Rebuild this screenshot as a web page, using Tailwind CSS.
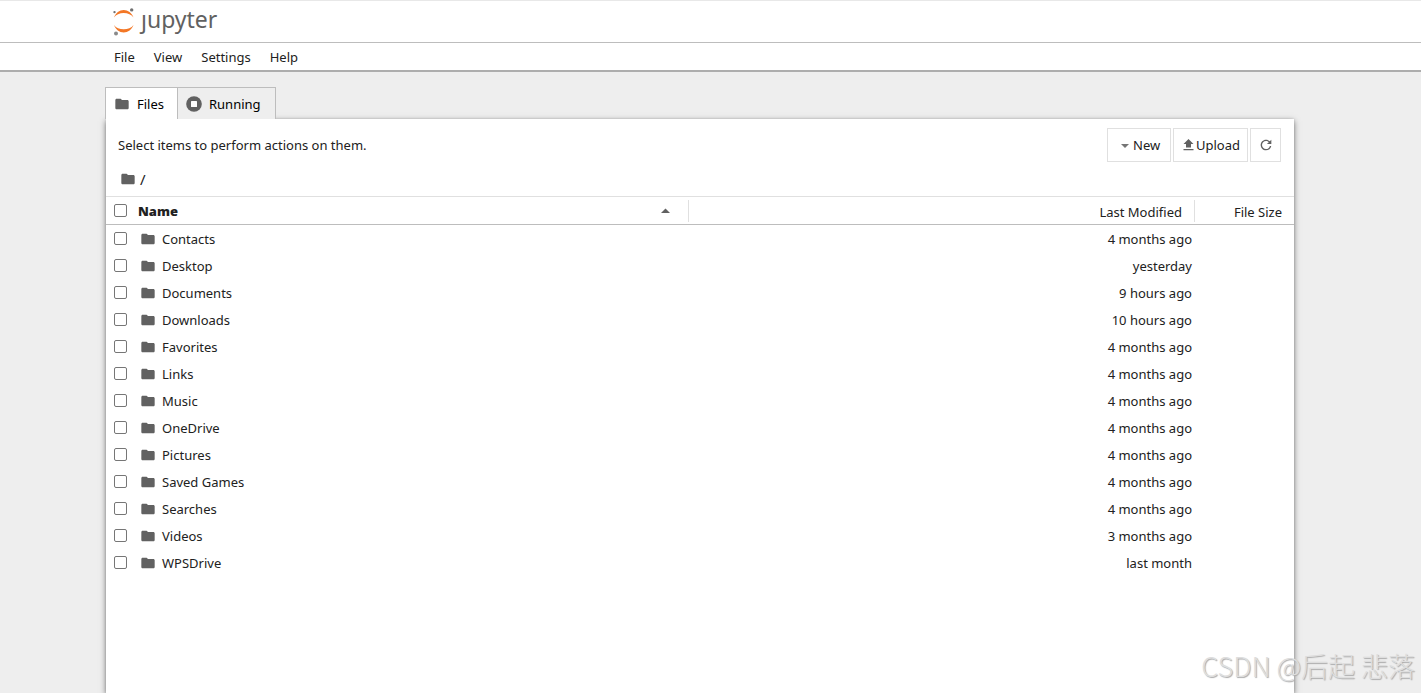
<!DOCTYPE html>
<html lang="en">

<head>
    <meta charset="UTF-8">
    <meta name="viewport" content="width=device-width, initial-scale=1.0">
    <title>Home</title>
    <script src="https://cdn.jsdelivr.net/npm/@tailwindcss/browser@4"></script>
</head>

<body class="flex flex-col h-screen overflow-hidden bg-[#eeeeee] text-[13px] leading-5 text-[#212121] font-['Noto_Sans','Noto_Sans_CJK_SC',sans-serif]">

    <svg class="hidden">
        <symbol id="folder" viewBox="0 0 24 24">
            <path fill="#616161" d="M10 4H4c-1.1 0-1.99.9-1.99 2L2 18c0 1.1.9 2 2 2h16c1.1 0 2-.9 2-2V8c0-1.1-.9-2-2-2h-8l-2-2z" />
        </symbol>
    </svg>

    <header class="shrink-0 bg-white border-t border-[#e8e8e8]">
        <div class="flex items-start h-[42px] pl-[112px] pt-[7px] border-b border-[#bdbdbd]">
            <a href="#" class="flex gap-[7px]">
                <svg class="w-[22px] h-7" viewBox="0 0 22 28">
                    <path fill="#f37726" d="M2 9.500C3.500 5 7.500 2 11.700 2S20 5 21.500 9.500C19.500 6.500 15.800 5 11.700 5S4 6.500 2 9.500z" />
                    <path fill="#f37726" d="M2 17C3.500 21.500 7.500 24.500 11.700 24.500S20 21.500 21.500 17C19.500 20 15.800 21.300 11.700 21.300S4 20 2 17z" />
                    <circle fill="#707070" cx="19.700" cy="1.900" r="1.700" />
                    <circle fill="#707070" cx="2.500" cy="4.100" r="1.200" />
                    <circle fill="#8a8a8a" cx="4" cy="25.500" r="2" />
                </svg>
                <!-- the wordmark's j has no dot -->
                <span class="relative text-[23px] leading-[22px] text-[#616161]">jupyter<i class="absolute left-0 -top-1 w-[7px] h-[9px] bg-white"></i></span>
            </a>
        </div>
        <nav class="h-[29px] pl-[114px] pt-1 border-b-2 border-[#adadad]">
            <ul class="flex gap-[19px]">
                <li><a href="#">File</a></li>
                <li><a href="#">View</a></li>
                <li><a href="#">Settings</a></li>
                <li><a href="#">Help</a></li>
            </ul>
        </nav>
    </header>

    <main class="flex flex-col grow ml-[105px] mr-[127px] pt-[15px]">
        <div class="flex relative z-10 text-black">
            <button class="flex items-center gap-[7px] h-8 w-[73px] pl-2 border border-b-0 border-[#bdbdbd] bg-white">
                <svg class="size-4"><use href="#folder" /></svg>Files
            </button>
            <button class="flex items-center gap-[7px] h-8 w-[98px] pl-2 border border-b-0 border-l-0 border-[#bdbdbd] bg-[#eeeeee]">
                <svg class="size-4" viewBox="0 0 16 16">
                    <circle cx="8" cy="8" r="7.800" fill="#616161" />
                    <rect x="5" y="5" width="6" height="6" rx="0.500" fill="#fff" />
                </svg>Running
            </button>
        </div>

        <section class="grow ml-px bg-white shadow-[0_0_2px_rgba(0,0,0,0.12),0_2px_6px_rgba(0,0,0,0.5)]">
            <div class="flex justify-between items-center pl-3 pr-[13px] pt-[9px]">
                <p>Select items to perform actions on them.</p>
                <div class="flex gap-[2px]">
                    <button class="flex items-center h-[34px] w-16 pl-3 gap-1 border border-[#e0e0e0]">
                        <svg class="w-[9px] h-4" viewBox="0 0 9 16"><path fill="#757575" d="M1 7h8L5 11z" /></svg>New
                    </button>
                    <button class="flex items-center h-[34px] w-[75px] pl-2 border border-[#e0e0e0]">
                        <svg class="w-[14px] h-4" viewBox="0 0 14 16"><path fill="#616161" d="M4 10.500h5V7h2.500L6.500 2 1.500 7H4zM1.500 12h10v1.200h-10z" /></svg>Upload
                    </button>
                    <button class="flex items-center justify-center h-[34px] w-[31px] border border-[#e0e0e0]" aria-label="Refresh">
                        <svg class="size-4" viewBox="0 0 18 18"><path fill="#616161" d="M9 13.500c-2.490 0-4.500-2.010-4.500-4.500S6.510 4.500 9 4.500c1.240 0 2.360.520 3.170 1.330L10 8h5V3l-1.760 1.760C12.150 3.680 10.660 3 9 3 5.690 3 3.010 5.690 3.010 9S5.690 15 9 15c2.970 0 5.430-2.160 5.900-5h-1.520c-.460 2-2.240 3.500-4.380 3.500z" /></svg>
                    </button>
                </div>
            </div>
            <div class="flex items-center gap-1 h-[34px] pl-[14px]">
                <a href="#" aria-label="Home"><svg class="size-4"><use href="#folder" /></svg></a>
                <span class="text-[15px]">/</span>
            </div>

            <table class="w-full table-fixed">
                <thead>
                    <tr class="h-7 border-t border-t-[#e0e0e0] border-b border-b-[#bdbdbd]">
                        <th class="w-8 pl-2 text-left"><input type="checkbox" id="all" aria-label="Select all" class="block appearance-none size-[13px] rounded-[2px] border border-[#767676] bg-white"></th>
                        <th class="w-[551px] p-0">
                            <div class="flex items-center justify-between h-[22px] pr-[18px] border-r border-[#e0e0e0]">
                                <b>Name</b>
                                <svg class="w-[9px] h-4" viewBox="0 0 9 16"><path fill="#616161" d="M0 10h9L4.500 5.500z" /></svg>
                            </div>
                        </th>
                        <th class="p-0 font-normal text-right"><div class="h-[22px] pt-[2px] pr-3 border-r border-[#e0e0e0]">Last Modified</div></th>
                        <th class="w-[99px] p-0 font-normal text-right"><div class="h-[22px] pt-[2px] pr-3">File Size</div></th>
                    </tr>
                </thead>
                <tbody id="files"></tbody>
            </table>
        </section>
    </main>

    <div class="absolute right-[6px] bottom-[7px] text-[27px] leading-10 text-[#dedede] [text-shadow:1px_1px_1px_#aaa] font-['Noto_Sans_CJK_SC',sans-serif] font-light">CSDN @后起 悲落</div>

    <script>
        const files = [
            ['Contacts', '4 months ago'],
            ['Desktop', 'yesterday'],
            ['Documents', '9 hours ago'],
            ['Downloads', '10 hours ago'],
            ['Favorites', '4 months ago'],
            ['Links', '4 months ago'],
            ['Music', '4 months ago'],
            ['OneDrive', '4 months ago'],
            ['Pictures', '4 months ago'],
            ['Saved Games', '4 months ago'],
            ['Searches', '4 months ago'],
            ['Videos', '3 months ago'],
            ['WPSDrive', 'last month'],
        ];

        document.getElementById('files').innerHTML = files.map(([name, modified], i) => `
            <tr class="h-[27px]">
                <td class="pl-2"><input type="checkbox" id="f${i}" class="block appearance-none size-[13px] rounded-[2px] border border-[#767676] bg-white"></td>
                <td class="p-0"><label for="f${i}" class="flex items-center gap-[6px] pl-[2px] pt-[2px]"><svg class="size-4"><use href="#folder" /></svg>${name}</label></td>
                <td class="p-0 pt-[2px] pr-[3px] text-right">${modified}</td>
                <td></td>
            </tr>`).join('');
    </script>

</body>

</html>
